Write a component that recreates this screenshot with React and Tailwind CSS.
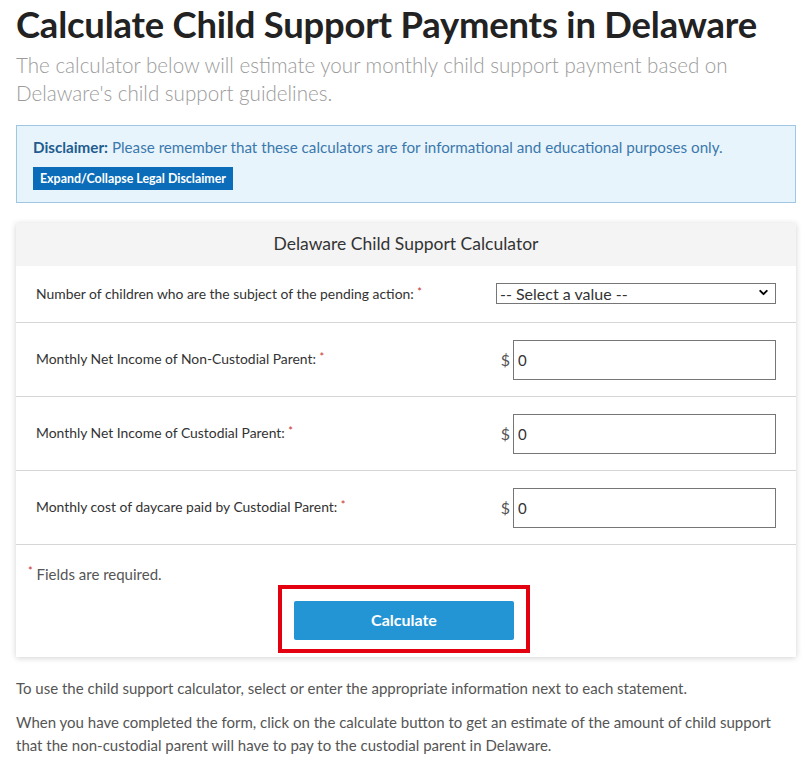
import { ChevronDown } from "lucide-react";

const rows = [
  { label: "Monthly Net Income of Non-Custodial Parent:" },
  { label: "Monthly Net Income of Custodial Parent:" },
  { label: "Monthly cost of daycare paid by Custodial Parent:" },
];

const Req = () => <span className="text-[#c9302c] text-[11px] align-top">*</span>;

const App = () => {
  return (
    <div className="bg-white min-h-screen pl-4 pr-[13px] pt-[3px] text-[#333] font-['Lato','Noto_Sans',sans-serif]">
      <h1 className="text-[36.4px] leading-[42px] font-bold text-[#222] tracking-[-0.2px]">
        Calculate Child Support Payments in Delaware
      </h1>
      <p className="mt-[6px] text-[20.6px] leading-[28px] font-light text-[#9b9b9b]">
        The calculator below will estimate your monthly child support payment based on Delaware's child support guidelines.
      </p>

      {/* Disclaimer */}
      <div className="mt-[18px] border border-[#9fc6e2] bg-[#e8f4fb] px-4 pt-[11px] pb-[12px]">
        <p className="text-[15.2px] leading-[20px] text-[#3b78ad]">
          <span className="font-bold text-[#1f5c8f]">Disclaimer:</span> Please remember that these calculators are for informational and educational purposes only.
        </p>
        <button className="mt-[10px] bg-[#0b6dba] text-white text-[12.4px] font-bold px-[7px] h-[23px] leading-[23px]">
          Expand/Collapse Legal Disclaimer
        </button>
      </div>

      {/* Calculator card */}
      <div className="mt-[20px] bg-white shadow-[0_1px_6px_rgba(0,0,0,0.18)]">
        <div className="bg-[#f4f4f4] h-[43px] flex items-center justify-center text-[17.5px] text-[#333]">
          Delaware Child Support Calculator
        </div>

        <div className="flex items-center justify-between pl-5 pr-5 h-[57px] border-b border-[#d6d6d6]">
          <span className="text-[13.9px]">
            Number of children who are the subject of the pending action: <Req />
          </span>
          <div className="relative w-[280px]">
            <select className="appearance-none w-full h-[21px] border border-[#767676] bg-white pl-[3px] text-[16px] leading-[19px] text-[#333] outline-none">
              <option>-- Select a value --</option>
            </select>
            <ChevronDown className="absolute right-[6px] top-[4px] w-[13px] h-[13px] text-black pointer-events-none" strokeWidth={3.5} />
          </div>
        </div>

        {rows.map((r) => (
          <div key={r.label} className="flex items-center justify-between pl-5 pr-5 h-[74px] border-b border-[#d6d6d6]">
            <span className="text-[13.9px]">
              {r.label} <Req />
            </span>
            <div className="flex items-center w-[280px] justify-end">
              <span className="text-[16px] text-[#555] mr-[3px]">$</span>
              <input
                readOnly
                value="0"
                className="w-[263px] h-[40px] border border-[#767676] pl-[4px] text-[15px] text-[#333] outline-none"
              />
            </div>
          </div>
        ))}

        <div className="px-3 pt-[18px] pb-[4px]">
          <p className="text-[15px] text-[#555]">
            <Req /> Fields are required.
          </p>
          <div className="flex justify-center -mt-[1px]">
            <div className="border-4 border-[#e3000f] px-3 pt-3 pb-[9px] ml-[-4px]">
              <button className="w-[220px] h-[39px] bg-[#2395d5] rounded-[2px] text-white text-[16px] font-bold">
                Calculate
              </button>
            </div>
          </div>
        </div>
      </div>

      <p className="mt-[19px] text-[15px] leading-[24px] text-[#555]">
        To use the child support calculator, select or enter the appropriate information next to each statement.
      </p>
      <p className="mt-[11px] text-[15px] leading-[23px] text-[#555]">
        When you have completed the form, click on the calculate button to get an estimate of the amount of child support that the non-custodial parent will have to pay to the custodial parent in Delaware.
      </p>
    </div>
  );
};

export default App;
